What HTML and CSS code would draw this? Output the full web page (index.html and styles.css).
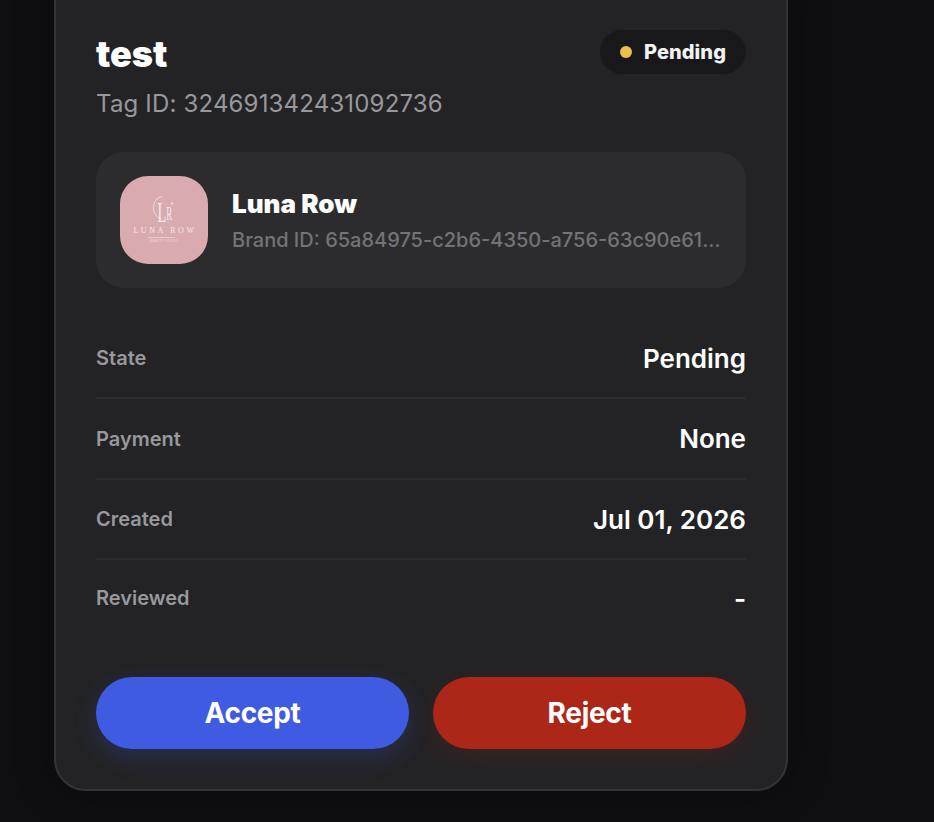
FILE: index.html
```html
<!DOCTYPE html>
<html>
<head>
<link rel="stylesheet" href="styles.css">
</head>
<body>

<div class="card">
  <div class="header">
    <div class="header-text">
      <div class="title">test</div>
      <div class="tag-id">Tag ID: 324691342431092736</div>
    </div>
    <div class="status-pill">
      <span class="status-dot"></span>
      <span class="status-text">Pending</span>
    </div>
  </div>

  <div class="brand">
    <svg class="brand-logo" viewBox="0 0 88 88">
      <rect width="88" height="88" fill="#d9abb0"/>
      <path d="M42 20.5 C36.5 21.5 33.5 26 33.5 31.5 C33.5 37 36.5 41 40.5 43" fill="none" stroke="#f7e9e6" stroke-width="0.8"/>
      <text class="logo-mono" transform="translate(37.5 46) scale(0.5 1)">L<tspan class="logo-mono-r" dy="-2">R</tspan></text>
      <path d="M52 25.5 l0.5 1.5 1.5 0.5 -1.5 0.5 -0.5 1.5 -0.5 -1.5 -1.5 -0.5 1.5 -0.5 z" fill="#f7e9e6"/>
      <text class="logo-name" x="45" y="57">LUNA ROW</text>
      <rect x="28" y="61" width="27" height="0.5" fill="#f7e9e6"/>
      <text class="logo-sub" x="44.5" y="66">BEAUTY STUDIO</text>
    </svg>
    <div class="brand-info">
      <div class="brand-name">Luna Row</div>
      <div class="brand-id">Brand ID: 65a84975-c2b6-4350-a756-63c90e61b2f47d10</div>
    </div>
  </div>

  <div class="details">
    <div class="row">
      <span class="row-label">State</span>
      <span class="row-value">Pending</span>
    </div>
    <div class="row">
      <span class="row-label">Payment</span>
      <span class="row-value">None</span>
    </div>
    <div class="row">
      <span class="row-label">Created</span>
      <span class="row-value">Jul 01, 2026</span>
    </div>
    <div class="row">
      <span class="row-label">Reviewed</span>
      <span class="row-value">-</span>
    </div>
  </div>

  <div class="actions">
    <button class="accept-button">Accept</button>
    <button class="reject-button">Reject</button>
  </div>
</div>

</body>
</html>
```

FILE: styles.css
```css
html {
  background-color: #0f0f11;
}

body {
  font-family: Inter, "Liberation Sans", sans-serif;
  height: 822px;
  margin: 0;
  overflow: hidden;
}

.card {
  background-color: #232325;
  border: 2px solid #343436;
  border-radius: 32px;
  box-shadow: 0 0 40px rgba(0, 0, 0, 0.3);
  margin-left: 54px;
  margin-top: -40px;
  padding: 68px 40px 40px;
  width: 650px;
}

.header {
  align-items: flex-start;
  display: flex;
  justify-content: space-between;
}

.title {
  color: #fff;
  font-size: 36px;
  font-weight: 900;
  line-height: 48px;
}

.tag-id {
  color: #98989d;
  font-size: 24px;
  letter-spacing: 0.17px;
  line-height: 30px;
  margin-top: 11px;
}

.status-pill {
  align-items: center;
  background-color: #18181a;
  border-radius: 22px;
  display: flex;
  gap: 12px;
  height: 44px;
  padding: 0 20px;
}

.status-dot {
  background-color: #ebc04b;
  border-radius: 50%;
  height: 12px;
  width: 12px;
}

.status-text {
  color: #f2f2f2;
  font-size: 20px;
  font-weight: 800;
  letter-spacing: 0.08px;
}

.brand {
  align-items: center;
  background-color: #2c2c2e;
  border-radius: 28px;
  display: flex;
  gap: 24px;
  margin-top: 33px;
  padding: 24px;
}

.brand-logo {
  border-radius: 28px;
  flex-shrink: 0;
  height: 88px;
  width: 88px;
}

.logo-mono {
  fill: #f7e9e6;
  font-family: "Liberation Serif", serif;
  font-size: 29px;
}

.logo-mono-r {
  font-size: 18px;
}

.logo-name {
  fill: #f7e9e6;
  font-family: "Liberation Serif", serif;
  font-size: 8px;
  letter-spacing: 2.6px;
  text-anchor: middle;
}

.logo-sub {
  fill: #f0dcdc;
  font-family: "Liberation Sans", sans-serif;
  font-size: 2.8px;
  letter-spacing: 0.5px;
  text-anchor: middle;
}

.brand-info {
  min-width: 0;
}

.brand-name {
  color: #fff;
  font-size: 26px;
  font-weight: 900;
  line-height: 32px;
}

.brand-id {
  color: #737378;
  font-size: 20px;
  font-weight: 500;
  line-height: 26px;
  margin-top: 7px;
  overflow: hidden;
  text-overflow: ellipsis;
  white-space: nowrap;
}

.details {
  margin-top: 30.5px;
}

.row {
  align-items: center;
  border-bottom: 2px solid #2c2c2e;
  box-sizing: border-box;
  display: flex;
  height: 80.5px;
  justify-content: space-between;
  padding-top: 1px;
}

.row:last-child {
  border-bottom: none;
  height: 78px;
  padding-bottom: 2px;
  padding-top: 0;
}

.row-label {
  color: #98989d;
  font-size: 20px;
  font-weight: 600;
}

.row-value {
  color: #fff;
  font-size: 26px;
  font-weight: 600;
}

.actions {
  display: flex;
  gap: 24px;
  margin-top: 39px;
}

.accept-button,
.reject-button {
  border: none;
  border-radius: 36px;
  color: #fff;
  flex: 1;
  font-family: inherit;
  font-size: 28px;
  font-weight: 700;
  height: 72px;
  letter-spacing: -0.3px;
}

.accept-button {
  background-color: #3e5be2;
  box-shadow: 0 8px 24px rgba(62, 91, 226, 0.22);
}

.reject-button {
  background-color: #ad2719;
  box-shadow: 0 8px 24px rgba(173, 39, 25, 0.16);
}
```
